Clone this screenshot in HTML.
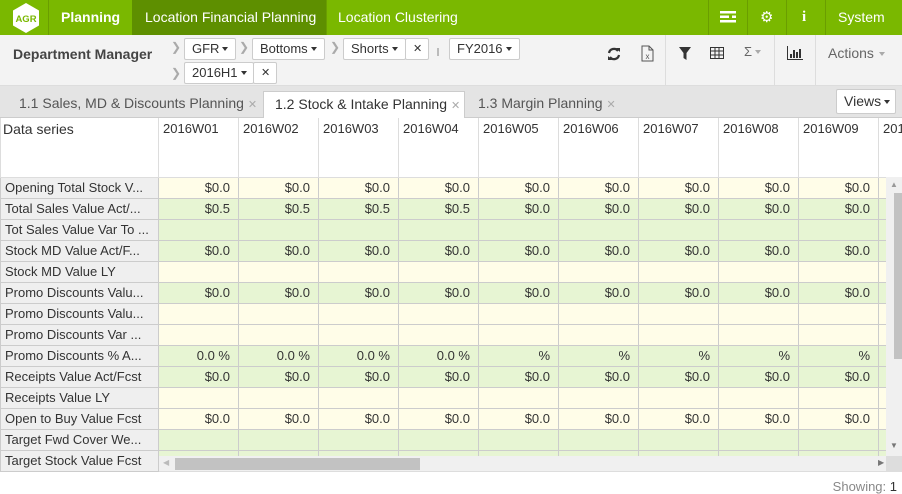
<!DOCTYPE html>
<html><head><meta charset="utf-8"><style>
*{box-sizing:border-box;margin:0;padding:0}
body{width:902px;height:493px;overflow:hidden;background:#fff;font-family:"Liberation Sans",sans-serif;font-size:14px;color:#333;position:relative}
.a{position:absolute}
.top{left:0;top:0;width:902px;height:35px;background:#7ab800;color:#fff}
.top .t{position:absolute;top:0;height:35px;line-height:35px;font-size:14px}
.vs{position:absolute;top:0;width:1px;height:35px;background:#6a9e00}
.tb{left:0;top:35px;width:902px;height:51px;background:#f3f3f3;border-bottom:1px solid #ddd}
.btn{position:absolute;height:22px;line-height:20px;background:#fff;border:1px solid #ccc;border-radius:2px;font-size:13px;padding:0 7px;color:#333;white-space:nowrap}
.car{display:inline-block;width:0;height:0;border-left:3.5px solid transparent;border-right:3.5px solid transparent;border-top:4px solid #333;vertical-align:2px;margin-left:3px}
.chev{position:absolute;color:#aaa;font-size:12px}
.tabs{left:0;top:86px;width:902px;height:32px;background:#e4e4e4;border-bottom:1px solid #ccc}
.tab{position:absolute;top:5px;height:27px;line-height:25px;font-size:14px;color:#555;white-space:nowrap}
.x{color:#aaa;font-size:11px;margin-left:4px}
table{border-collapse:collapse;table-layout:fixed;position:absolute;left:0;top:118px;width:958px}
td{height:21px;border:1px solid #ccc;border-top:none;font-size:13px;white-space:nowrap;overflow:hidden;text-align:right;padding-right:8px}
td.l{text-align:left;padding-left:4px;background:#efefef}
tr.y td{background:#fffde8}tr.g td{background:#e7f5d3}
tr.y td.l,tr.g td.l{background:#efefef}
tr.h td{height:59px;background:#fff;vertical-align:top;text-align:left;padding:3px 0 0 4px;font-size:13px;border-color:#ddd}
</style></head><body>
<div class="a top">
 <svg class="a" style="left:10px;top:2px" width="32" height="32" viewBox="0 0 32 32"><polygon points="16,1 29,8.5 29,23.5 16,31 3,23.5 3,8.5" fill="#fff"/><text x="16" y="20" text-anchor="middle" font-family="Liberation Sans" font-weight="bold" font-size="9.5" fill="#7ab800">AGR</text></svg>
 <div class="vs" style="left:48px"></div>
 <div class="t" style="left:61px;font-weight:bold">Planning</div>
 <div class="a" style="left:132px;top:0;width:194px;height:35px;background:#5e8f00"></div>
 <div class="t" style="left:145px">Location Financial Planning</div>
 <div class="t" style="left:338px">Location Clustering</div>
 <div class="vs" style="left:326px"></div>
 <div class="vs" style="left:708px"></div><div class="vs" style="left:747px"></div><div class="vs" style="left:786px"></div><div class="vs" style="left:825px"></div>
 <svg class="a" style="left:720px;top:11px" width="16" height="12"><rect x="0" y="0" width="16" height="2.5" fill="#fff"/><rect x="0" y="4.5" width="16" height="2.5" fill="#fff"/><rect x="0" y="9" width="16" height="2.5" fill="#fff"/><rect x="9" y="4.5" width="3" height="2.5" fill="#7ab800"/></svg>
 <div class="t" style="left:760px;font-size:15px">&#9881;</div>
 <div class="t" style="left:802px;font-weight:bold;font-family:'Liberation Serif',serif;font-size:15px">i</div>
 <div class="t" style="left:838px">System</div>
</div>
<div class="a tb">
 <div class="a" style="left:13px;top:11px;font-weight:bold;font-size:14px;color:#444">Department Manager</div>
 <span class="chev" style="left:171px;top:5px">&#x276F;</span>
 <div class="btn" style="left:184px;top:3px">GFR<span class="car"></span></div>
 <span class="chev" style="left:239px;top:5px">&#x276F;</span>
 <div class="btn" style="left:252px;top:3px">Bottoms<span class="car"></span></div>
 <span class="chev" style="left:330px;top:5px">&#x276F;</span>
 <div class="btn" style="left:343px;top:3px;width:63px">Shorts<span class="car"></span></div>
 <div class="btn" style="left:405px;top:3px;width:24px;padding:0 7px;font-size:11px">&#x2715;</div>
 <div class="a" style="left:437px;top:13px;width:2px;height:8px;background:#bbb"></div>
 <div class="btn" style="left:449px;top:3px">FY2016<span class="car"></span></div>
 <span class="chev" style="left:171px;top:31px">&#x276F;</span>
 <div class="btn" style="left:184px;top:27px;width:70px">2016H1<span class="car"></span></div>
 <div class="btn" style="left:253px;top:27px;width:24px;font-size:11px">&#x2715;</div>
 <svg class="a" style="left:607px;top:12px" width="14" height="14" viewBox="0 0 14 14"><path d="M2 6A5 5 0 0 1 11 4M12 8A5 5 0 0 1 3 10" stroke="#333" stroke-width="2.2" fill="none"/><polygon points="9,1 13,1 13,5" fill="#333"/><polygon points="1,9 5,13 1,13" fill="#333"/></svg>
 <svg class="a" style="left:641px;top:10px" width="13" height="17" viewBox="0 0 13 17"><path d="M1 1H8L12 5V16H1Z M8 1V5H12" stroke="#555" fill="none"/><text x="6.5" y="14" text-anchor="middle" font-size="8" fill="#555">x</text></svg>
 <div class="a" style="left:665px;top:0;width:1px;height:51px;background:#ddd"></div>
 <svg class="a" style="left:679px;top:12px" width="12" height="13"><polygon points="0,0 12,0 7.5,6 7.5,13 4.5,11 4.5,6" fill="#333"/></svg>
 <svg class="a" style="left:710px;top:12px" width="14" height="12"><rect x="0.5" y="0.5" width="13" height="11" fill="none" stroke="#333"/><path d="M0 4H14M0 8H14M5 0V12M9 0V12" stroke="#333"/></svg>
 <div class="a" style="left:744px;top:9px;font-size:13px;color:#666">&Sigma;<span class="car" style="border-top-color:#aaa"></span></div>
 <div class="a" style="left:774px;top:0;width:1px;height:51px;background:#ddd"></div>
 <svg class="a" style="left:787px;top:11px" width="16" height="14"><path d="M0.5 0V13.5H16" stroke="#333" fill="none"/><path d="M4 12V8M7 12V4M10 12V6M13 12V3" stroke="#333" stroke-width="2"/></svg>
 <div class="a" style="left:815px;top:0;width:1px;height:51px;background:#ddd"></div>
 <div class="a" style="left:828px;top:10px;color:#666;white-space:nowrap">Actions<span class="car" style="border-top-color:#aaa;margin-left:5px"></span></div>
</div>
<div class="a tabs">
 <div class="tab" style="left:19px">1.1 Sales, MD &amp; Discounts Planning<span class="x">&#x2715;</span></div>
 <div class="tab" style="left:263px;width:202px;background:#fff;border:1px solid #ccc;border-bottom:none;padding-left:11px;color:#333">1.2 Stock &amp; Intake Planning<span class="x">&#x2715;</span></div>
 <div class="tab" style="left:478px">1.3 Margin Planning<span class="x">&#x2715;</span></div>
 <div class="btn" style="left:836px;top:3px;width:60px;height:25px;line-height:23px;font-size:14px">Views<span class="car"></span></div>
</div>
<table>
<colgroup><col style="width:158px"><col style="width:80px"><col style="width:80px"><col style="width:80px"><col style="width:80px"><col style="width:80px"><col style="width:80px"><col style="width:80px"><col style="width:80px"><col style="width:80px"><col style="width:80px"></colgroup>
<tr class="h"><td class="l" style="background:#fff;font-size:14px;padding-left:2px">Data series</td><td>2016W01</td><td>2016W02</td><td>2016W03</td><td>2016W04</td><td>2016W05</td><td>2016W06</td><td>2016W07</td><td>2016W08</td><td>2016W09</td><td>2016W10</td></tr>
<tr class="y"><td class="l">Opening Total Stock V...</td><td>$0.0</td><td>$0.0</td><td>$0.0</td><td>$0.0</td><td>$0.0</td><td>$0.0</td><td>$0.0</td><td>$0.0</td><td>$0.0</td><td></td></tr>
<tr class="g"><td class="l">Total Sales Value Act/...</td><td>$0.5</td><td>$0.5</td><td>$0.5</td><td>$0.5</td><td>$0.0</td><td>$0.0</td><td>$0.0</td><td>$0.0</td><td>$0.0</td><td></td></tr>
<tr class="g"><td class="l">Tot Sales Value Var To ...</td><td></td><td></td><td></td><td></td><td></td><td></td><td></td><td></td><td></td><td></td></tr>
<tr class="g"><td class="l">Stock MD Value Act/F...</td><td>$0.0</td><td>$0.0</td><td>$0.0</td><td>$0.0</td><td>$0.0</td><td>$0.0</td><td>$0.0</td><td>$0.0</td><td>$0.0</td><td></td></tr>
<tr class="y"><td class="l">Stock MD Value LY</td><td></td><td></td><td></td><td></td><td></td><td></td><td></td><td></td><td></td><td></td></tr>
<tr class="g"><td class="l">Promo Discounts Valu...</td><td>$0.0</td><td>$0.0</td><td>$0.0</td><td>$0.0</td><td>$0.0</td><td>$0.0</td><td>$0.0</td><td>$0.0</td><td>$0.0</td><td></td></tr>
<tr class="y"><td class="l">Promo Discounts Valu...</td><td></td><td></td><td></td><td></td><td></td><td></td><td></td><td></td><td></td><td></td></tr>
<tr class="y"><td class="l">Promo Discounts Var ...</td><td></td><td></td><td></td><td></td><td></td><td></td><td></td><td></td><td></td><td></td></tr>
<tr class="g"><td class="l">Promo Discounts % A...</td><td>0.0 %</td><td>0.0 %</td><td>0.0 %</td><td>0.0 %</td><td>%</td><td>%</td><td>%</td><td>%</td><td>%</td><td></td></tr>
<tr class="g"><td class="l">Receipts Value Act/Fcst</td><td>$0.0</td><td>$0.0</td><td>$0.0</td><td>$0.0</td><td>$0.0</td><td>$0.0</td><td>$0.0</td><td>$0.0</td><td>$0.0</td><td></td></tr>
<tr class="y"><td class="l">Receipts Value LY</td><td></td><td></td><td></td><td></td><td></td><td></td><td></td><td></td><td></td><td></td></tr>
<tr class="y"><td class="l">Open to Buy Value Fcst</td><td>$0.0</td><td>$0.0</td><td>$0.0</td><td>$0.0</td><td>$0.0</td><td>$0.0</td><td>$0.0</td><td>$0.0</td><td>$0.0</td><td></td></tr>
<tr class="g"><td class="l">Target Fwd Cover We...</td><td></td><td></td><td></td><td></td><td></td><td></td><td></td><td></td><td></td><td></td></tr>
<tr class="g"><td class="l">Target Stock Value Fcst</td><td></td><td></td><td></td><td></td><td></td><td></td><td></td><td></td><td></td><td></td></tr>
</table>
<div class="a" style="left:886px;top:177px;width:16px;height:280px;background:#f0f0f0"></div>
<div class="a" style="left:890px;top:180px;font-size:8px;color:#999">&#9650;</div>
<div class="a" style="left:890px;top:441px;font-size:8px;color:#777">&#9660;</div>
<div class="a" style="left:894px;top:193px;width:8px;height:166px;background:#c2c2c2"></div>
<div class="a" style="left:159px;top:456px;width:743px;height:16px;background:#f0f0f0;border-bottom:1px solid #ddd"></div>
<div class="a" style="left:163px;top:458px;font-size:8px;color:#bbb">&#9664;</div>
<div class="a" style="left:878px;top:458px;font-size:8px;color:#777">&#9654;</div>
<div class="a" style="left:175px;top:458px;width:245px;height:12px;background:#c2c2c2"></div>
<div class="a" style="left:886px;top:456px;width:16px;height:16px;background:#ddd"></div>
<div class="a" style="right:5px;top:479px;font-size:13px;color:#888;white-space:nowrap">Showing: <span style="color:#333">1</span></div>
</body></html>
